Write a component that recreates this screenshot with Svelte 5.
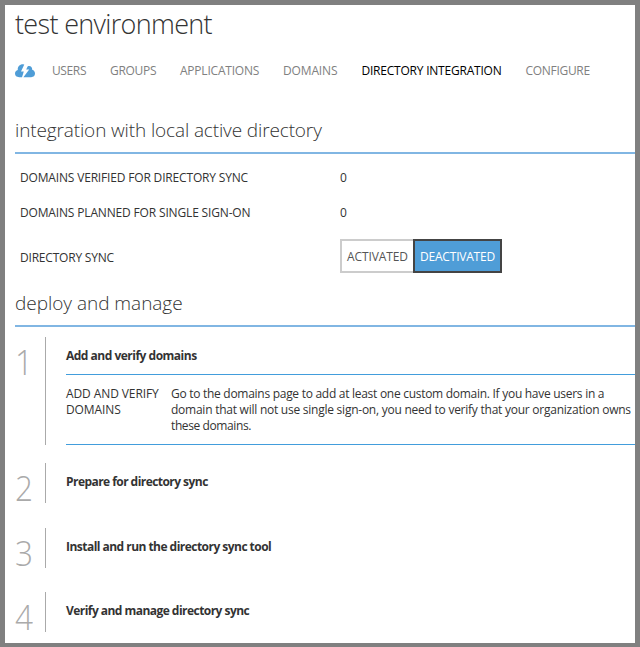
<script>
  const tabs = [
    { name: 'USERS', width: 58, track: -0.38 },
    { name: 'GROUPS', width: 70, track: -0.3 },
    { name: 'APPLICATIONS', width: 103, track: -0.22 },
    { name: 'DOMAINS', width: 78.5, track: -0.15 },
    { name: 'DIRECTORY INTEGRATION', width: 164, track: -0.22, active: true },
    { name: 'CONFIGURE', width: 66, track: -0.3 }
  ];
  const steps = [
    { title: 'Add and verify domains', height: 108, gap: 18, track: -0.5, open: true },
    { title: 'Prepare for directory sync', height: 40, gap: 25, track: -0.55 },
    { title: 'Install and run the directory sync tool', height: 40, gap: 24, track: -0.53 },
    { title: 'Verify and manage directory sync', height: 40, gap: 0, track: -0.54 }
  ];
</script>

<div class="frame">
  <h1>test environment</h1>
  <nav>
    <svg class="cloud" width="20" height="14" viewBox="0 0 20 14">
      <path fill="#4f9dd7" d="M4.2 13.2C1.5 13.2 0 11.8 0 9.6 0 7.8 1.2 6.5 2.8 6.1 2.4 2.8 4.5.3 8 .3L9.3.5 6 7.5H8.8L7 13.2Z" />
      <path fill="#4f9dd7" d="M8.4 13.2 14.2 5.6H11.2L12.6 2.4C15.2 1.4 17.4 3 17.2 5.8 19 6.3 20 7.8 20 9.6 20 11.8 18.5 13.2 16.2 13.2Z" />
    </svg>
    {#each tabs as tab}
      <a class:active={tab.active} style="width:{tab.width}px;letter-spacing:{tab.track}px">{tab.name}</a>
    {/each}
  </nav>

  <h2 class="integration">integration with local active directory</h2>
  <dl>
    <div class="row"><dt class="verified">DOMAINS VERIFIED FOR DIRECTORY SYNC</dt><dd>0</dd></div>
    <div class="row"><dt class="planned">DOMAINS PLANNED FOR SINGLE SIGN-ON</dt><dd>0</dd></div>
    <div class="row tall">
      <dt class="sync">DIRECTORY SYNC</dt>
      <dd class="toggle"><button class="off">ACTIVATED</button><button class="on">DEACTIVATED</button></dd>
    </div>
  </dl>

  <h2 class="deploy">deploy and manage</h2>
  <ol>
    {#each steps as step, i}
      <li style="height:{step.height}px;margin-bottom:{step.gap}px">
        <div class="number"><span>{i + 1}</span></div>
        <section>
          <h3 style="letter-spacing:{step.track}px">{step.title}</h3>
          {#if step.open}
            <div class="details">
              <div class="label">ADD AND VERIFY<br />DOMAINS</div>
              <p>
                <span class="first">Go to the domains page to add at least one custom domain. If you have users in a</span><br />
                domain that will not use single sign-on, you need to verify that your organization owns<br />
                <span class="last">these domains.</span>
              </p>
            </div>
          {/if}
        </section>
      </li>
    {/each}
  </ol>
</div>

<style>
  :global(body) { margin: 0; overflow: hidden; }
  .frame {
    box-sizing: border-box;
    width: 640px;
    height: 647px;
    border: 5px solid #808080;
    border-bottom-width: 4px;
    padding-left: 10px;
    background: #fff;
    color: #333;
    font: 12px/16px "Open Sans", "Noto Sans", sans-serif;
    white-space: nowrap;
    overflow: hidden;
  }
  h1, h2, h3, p, dl, dd, ol { margin: 0; padding: 0; }
  h1 { font-size: 27px; line-height: 37px; height: 38px; font-weight: 300; letter-spacing: -0.67px; color: #333; }
  nav { display: flex; align-items: center; height: 16px; margin-top: 20px; }
  .cloud { width: 20px; margin-right: 17px; flex: none; }
  nav a { color: #808080; flex: none; }
  nav a.active { color: #000; }
  h2 { height: 35px; line-height: 22px; box-sizing: border-box; font-size: 19px; font-weight: 300; border-bottom: 2px solid #81b6e3; }
  .integration { margin-top: 40px; letter-spacing: -0.13px; }
  .deploy { margin-top: 7px; letter-spacing: -0.03px; }
  dl { padding: 6px 0 0 5px; }
  .row { display: flex; align-items: center; height: 35px; }
  .row.tall { height: 55px; }
  dt { width: 320px; flex: none; }
  .verified { letter-spacing: -0.17px; }
  .planned { letter-spacing: -0.16px; }
  .sync { letter-spacing: -0.2px; }
  .toggle { display: flex; height: 34px; padding-bottom: 3px; }
  button { box-sizing: border-box; height: 34px; margin: 0; padding: 1px 0 0 5px; font: inherit; text-align: left; }
  .off { width: 73px; border: 2px solid #ccc; border-right: 0; background: #fff; color: #555; letter-spacing: -0.1px; }
  .on { width: 89px; border: 2px solid #444; background: #4f9dd7; color: #fff; letter-spacing: -0.2px; }
  ol { list-style: none; padding-top: 10px; }
  li { display: flex; }
  .number { box-sizing: border-box; width: 31px; flex: none; border-right: 1px solid #aaa; font-size: 35px; line-height: 49px; font-weight: 300; color: #aaa; }
  .number span { display: inline-block; transform: scaleX(0.9); transform-origin: 0 0; }
  section { margin-left: 20px; flex: 1; }
  h3 { height: 37px; line-height: 38px; font-size: 12px; font-weight: 700; }
  .details { display: flex; height: 69px; border-top: 1px solid #429ddc; border-bottom: 1px solid #429ddc; }
  .label { width: 105px; flex: none; padding-top: 11px; letter-spacing: -0.1px; }
  p { padding-top: 11px; letter-spacing: -0.245px; }
  .first { letter-spacing: -0.28px; }
  .last { letter-spacing: -0.4px; }
</style>
